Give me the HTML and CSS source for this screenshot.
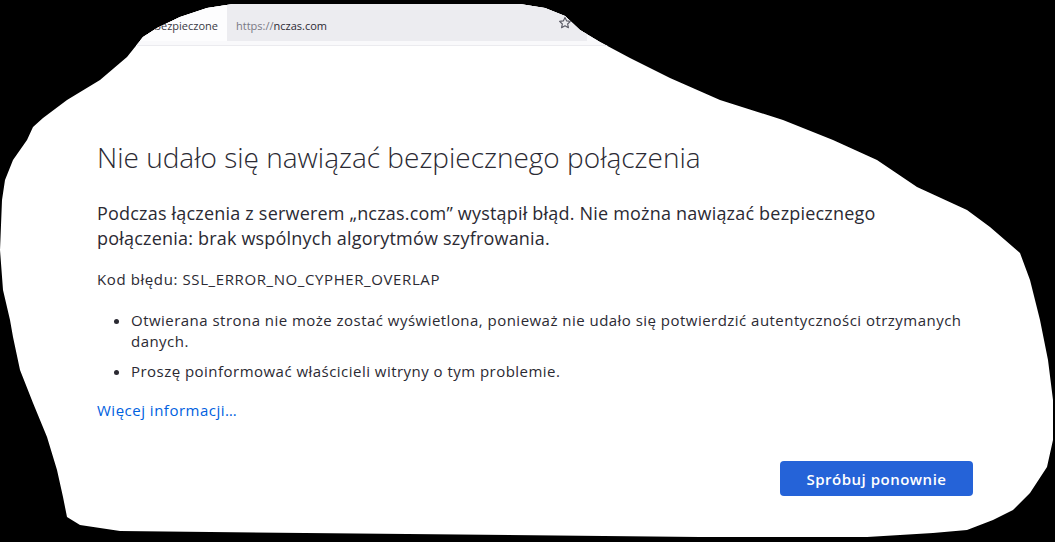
FILE: index.html
```html
<!DOCTYPE html>
<html lang="pl">
<head>
    <meta charset="UTF-8">
    <meta name="viewport" content="width=device-width, initial-scale=1.0">
    <title>Problem z nawiązaniem bezpiecznego połączenia</title>
    <link rel="stylesheet" href="styles.css">
</head>
<body>
    <div class="shot">
        <div class="toolbar">
            <div class="site-chip">Niezabezpieczone</div>
            <div class="urlbar">
                <span class="scheme">https://</span><span class="host">nczas.com</span>
                <svg class="star" width="14" height="14" viewBox="0 0 16 16">
                    <path d="M8 1.6l1.9 4 4.3.5-3.2 3 .9 4.3L8 11.2l-3.9 2.2.9-4.3-3.2-3 4.3-.5z" fill="none" stroke="#5b5b66" stroke-width="1.3" stroke-linejoin="round"/>
                </svg>
            </div>
        </div>

        <div class="container">
            <h1>Nie udało się nawiązać bezpiecznego połączenia</h1>
            <p class="short-desc">Podczas łączenia z serwerem „nczas.com” wystąpił błąd. Nie można nawiązać bezpiecznego połączenia: brak wspólnych algorytmów szyfrowania.</p>
            <p class="error-code">Kod błędu: SSL_ERROR_NO_CYPHER_OVERLAP</p>
            <ul class="long-desc">
                <li>Otwierana strona nie może zostać wyświetlona, ponieważ nie udało się potwierdzić autentyczności otrzymanych danych.</li>
                <li>Proszę poinformować właścicieli witryny o tym problemie.</li>
            </ul>
            <a class="learn-more" href="#">Więcej informacji…</a>
            <div class="actions">
                <button id="tryAgain">Spróbuj ponownie</button>
            </div>
        </div>
    </div>
</body>
</html>
```

FILE: styles.css
```css
* {
    margin: 0;
    padding: 0;
    box-sizing: border-box;
}

body {
    background: #000;
    font-family: "Open Sans", "Noto Sans", sans-serif;
    color: #2b2a33;
    width: 1055px;
    height: 542px;
    overflow: hidden;
}

/* the screenshot was cut out by hand, so the page sits in a ragged white shape */
.shot {
    width: 1055px;
    height: 542px;
    background: #fff;
    clip-path: polygon(
        233px 4px, 520px 4px, 545px 8px, 565px 16px, 580px 30px, 600px 42px,
        630px 58px, 670px 78px, 720px 100px, 783px 120px, 833px 140px,
        877px 160px, 917px 187px, 967px 210px, 990px 227px, 1020px 253px,
        1030px 280px, 1040px 320px, 1048px 360px, 1053px 400px, 1053px 440px,
        1047px 467px, 1030px 493px, 1013px 510px, 993px 520px, 967px 530px,
        933px 533px, 867px 537px, 700px 537px, 120px 531px, 80px 525px,
        67px 517px, 63px 497px, 57px 470px, 47px 437px, 33px 403px,
        20px 370px, 13px 337px, 10px 320px, 3px 290px, 0 250px, 2px 200px,
        5px 180px, 13px 160px, 27px 140px, 33px 127px, 43px 118px,
        67px 100px, 100px 80px, 127px 57px, 143px 37px, 157px 28px,
        180px 17px, 207px 8px
    );
}

.toolbar {
    display: flex;
    height: 46px;
    padding: 4px 0 4px 97px;
    background: #f9f9fb;
    border-bottom: 1px solid #ebebef;
    font-size: 11px;
}

.site-chip {
    width: 130px;
    padding: 6px 9px 0 0;
    display: flex;
    align-items: center;
    justify-content: flex-end;
    background: #fdfdfe;
    color: #3a3944;
}

.urlbar {
    width: 360px;
    padding: 6px 15px 0 9px;
    display: flex;
    align-items: center;
    background: #ececf0;
}

.scheme {
    color: #7a7984;
}

.host {
    color: #2b2a33;
}

.star {
    margin-left: auto;
    margin-top: -6px;
}

.container {
    width: 876px;
    margin-left: 97px;
    padding-top: 93px;
}

h1 {
    font-size: 28px;
    font-weight: 300;
    line-height: 36px;
    color: #2b2a33;
}

.short-desc {
    margin-top: 26px;
    max-width: 820px;
    font-size: 18px;
    line-height: 25px;
    letter-spacing: 0.2px;
}

.error-code {
    margin-top: 18px;
    font-size: 15px;
    line-height: 21px;
    letter-spacing: 0.6px;
}

.long-desc {
    margin-top: 20px;
    padding-left: 34px;
    font-size: 15px;
    line-height: 21px;
    letter-spacing: 0.47px;
}

.long-desc li + li {
    margin-top: 9px;
}

.learn-more {
    display: inline-block;
    margin-top: 18px;
    font-size: 15px;
    line-height: 21px;
    letter-spacing: 0.5px;
    color: #0061e0;
    text-decoration: none;
}

.actions {
    display: flex;
    justify-content: flex-end;
    margin-top: 40px;
}

#tryAgain {
    width: 193px;
    height: 35px;
    border: none;
    border-radius: 4px;
    background: #2563d8;
    color: #fff;
    font-family: inherit;
    font-size: 15px;
    font-weight: 600;
    letter-spacing: 0.5px;
    cursor: pointer;
}
```
